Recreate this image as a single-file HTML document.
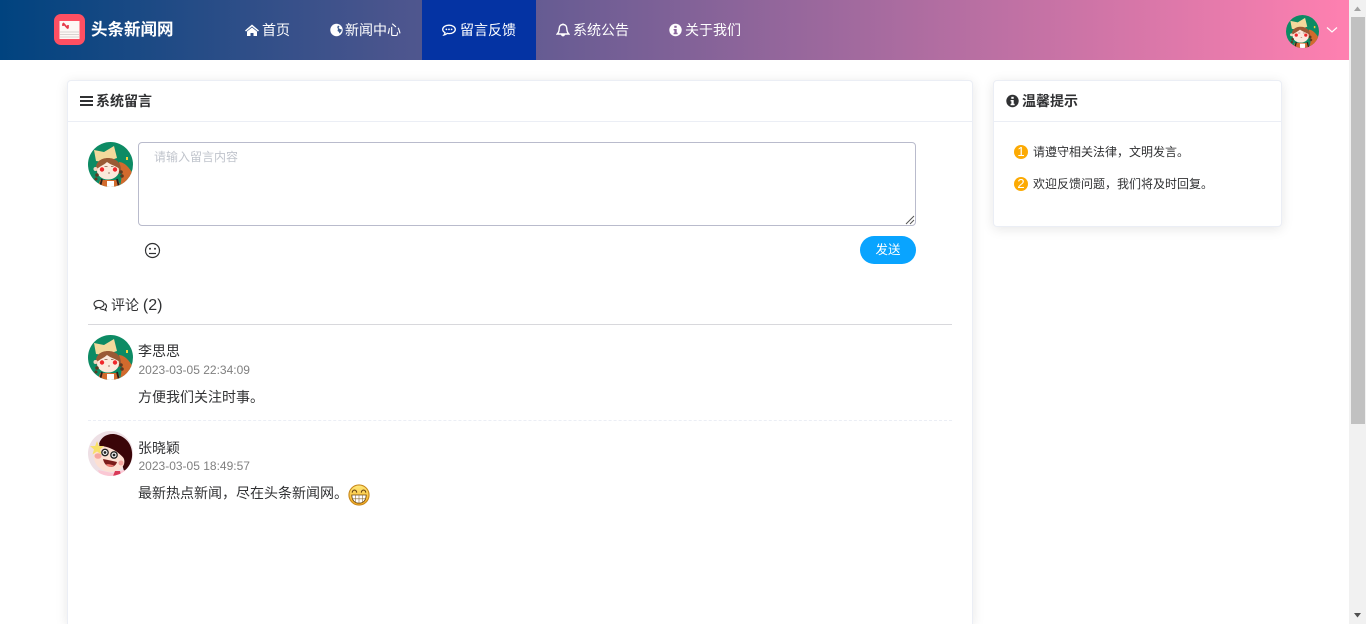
<!DOCTYPE html>
<html lang="zh"><head><meta charset="utf-8"><title>系统留言</title>
<style>
*{box-sizing:border-box}
html,body{margin:0;padding:0;width:1366px;height:624px;overflow:hidden;background:#fff}
body{position:relative;font-family:"Liberation Sans","Noto Sans CJK SC",sans-serif;font-size:14px;color:#303133}
.a{position:absolute;white-space:nowrap}
#hd{position:absolute;left:0;top:0;width:1349px;height:60px;background:linear-gradient(90deg,#00437f,#ff80b0)}
.nav{position:absolute;top:0;height:60px;line-height:60px;color:#fff;font-size:14px;white-space:nowrap}
.nav svg{position:absolute;top:23px;left:0}
.card{position:absolute;background:#fff;border:1px solid #ebeef5;border-radius:4px;box-shadow:0 2px 12px rgba(0,0,0,.1)}
.ct{font-weight:bold;font-size:14px;color:#303133;line-height:20px}
.line{position:absolute;height:1px;background:#ebeef5}
.av{position:absolute;width:45px;height:45px}
.num{position:absolute;width:14px;height:14px;border-radius:50%;background:#fcaa03;color:#fff;font-size:13px;line-height:14px;text-align:center}
</style></head><body>
<svg width="0" height="0" style="position:absolute">
<defs>
<clipPath id="c"><circle cx="22.5" cy="22.5" r="22.5"/></clipPath>
<g id="girl"><g clip-path="url(#c)">
<rect width="45" height="45" fill="#0d8b64"/>
<path d="M31 20 C36 20 41 25 45 32 V45 H32 L34 33 Z" fill="#d26a2d"/>
<path d="M6 8 L16 10 L26 4 L29 16 L17 20 L8 19 Z" fill="#f3d99c"/>
<path d="M8 28 C7 20 13 16 20 16 C27 16 33 20 33 28 L31 32 H10 Z" fill="#9a5a35"/>
<ellipse cx="20" cy="28.500" rx="11" ry="9" fill="#fbe9dc"/>
<path d="M9 27 C12 24 16 23 19 20 C23 23 28 24 32 27 C32 21 27 16.500 20 16.500 C14 16.500 9 21 9 27 Z" fill="#9a5a35"/>
<circle cx="7.500" cy="27" r="2" fill="#f5d5c0"/>
<circle cx="14" cy="27.500" r="2.200" fill="#f0272b"/><circle cx="27" cy="27.500" r="2.200" fill="#f0272b"/>
<path d="M16.500 24.500h3M23 24.500h2.500M20 31h2" stroke="#8a5a45" stroke-width=".7"/>
<circle cx="33" cy="30" r="1.800" fill="#5c3a22"/><circle cx="34" cy="34" r="1.800" fill="#5c3a22"/><circle cx="9" cy="33" r="1.800" fill="#5c3a22"/><circle cx="8" cy="37" r="1.500" fill="#5c3a22"/>
<path d="M10 45 L12 38 H30 L33 45 Z" fill="#d26a2d"/>
<path d="M19 39 H26 V45 H19 Z" fill="#fff"/>
<path d="M14 37 L12 45 M29 37 L31 45" stroke="#2a211c" stroke-width="1.800"/>
<rect x="38" y="15" width="2" height="3" fill="#f2d23c"/>
</g></g>
<g id="kid"><g clip-path="url(#c)">
<rect width="45" height="45" fill="#eee0e5"/>
<path d="M11 13 C13 5 22 1 30 4 C40 7 45 16 44 26 C43 33 40 37 36 40 L32 26 L14 18 Z" fill="#3a0508"/>
<path d="M6 24 C7 18 12 16 17 15 C24 14 33 20 36 28 C38 35 32 40 23 41 C13 41 5 33 6 24 Z" fill="#fde0d2"/>
<path d="M11 15 C16 8 30 10 36.500 28 C30 20 21 15 11 15 Z" fill="#3a0508"/>
<circle cx="17" cy="21.500" r="3.200" fill="#fff" stroke="#222" stroke-width="1.300"/><circle cx="26" cy="24" r="3.200" fill="#fff" stroke="#222" stroke-width="1.300"/>
<circle cx="17" cy="21.500" r="1.400" fill="#222"/><circle cx="26" cy="24" r="1.400" fill="#222"/>
<ellipse cx="10" cy="25" rx="3.500" ry="2.800" fill="#f6a6a0"/><ellipse cx="33" cy="32" rx="2.500" ry="2.500" fill="#f6a6a0"/>
<path d="M15 28 C20 29 25 30 29 31 C27 38 17 38 15 28 Z" fill="#7c1d1a"/>
<path d="M18 33.500 C20 32.500 23 33.500 26 34.500 C24 36.500 20 36.500 18 33.500 Z" fill="#ee7a6f"/>
<path d="M10 39 L24 42 L36 39 L42 45 H12 Z" fill="#fbc8d4"/>
<path d="M25 45 L27 40 L32 40 L33 45 Z" fill="#d93a58"/>
<path d="M9 10 L10.800 15 L16 15 L12 18.500 L13.500 23.500 L9 20.500 L4.500 23.500 L6 18.500 L2 15 L7.200 15 Z" fill="#f8e06a"/>
</g></g>
</defs></svg>

<div id="hd"></div>
<svg class="a" style="left:54px;top:14px" width="31" height="31" viewBox="0 0 31 31">
<rect width="31" height="31" rx="7" fill="#fe4f62"/>
<rect x="5.500" y="7" width="20" height="18" fill="#fdf7f5"/>
<path d="M6 18H25M6 20.500H25M6 23H25" stroke="#d9d3d1" stroke-width=".9"/>
<path d="M9 9 L14 14.500 M9 12V9.500 M14 14.500V11" stroke="#e63a4a" stroke-width="1.700"/>
</svg>
<div class="a" style="left:91px;top:17px;font-size:16.500px;line-height:26px;font-weight:bold;color:#fff">头条新闻网</div>

<div class="nav" style="left:245px;width:60px;padding-left:17px">
<svg width="14" height="14" viewBox="0 0 14 14"><path d="M7 1.500 L14 7.500 L13 8.500 L7 3.500 L1 8.500 L0 7.500 Z" fill="#fff"/><path d="M2 8.500 L7 4.500 L12 8.500 V13 H8.500 V10 H5.500 V13 H2 Z" fill="#fff"/></svg>首页</div>
<div class="nav" style="left:330px;padding-left:15px">
<svg width="13" height="14" viewBox="0 0 13 14"><circle cx="6.500" cy="7" r="6.200" fill="#fff"/><path d="M8 2.500 L9.500 3.500 L8.500 5 L10 6 L11.800 6.500 L11.300 8.500 L9.500 10.500 L8.800 8.800 L7.500 8 L8 6 L7.200 4.200 Z" fill="#3c5a8c"/></svg>新闻中心</div>
<div class="a" style="left:422px;top:0;width:114px;height:60px;background:#0433a3"></div>
<div class="nav" style="left:442px;padding-left:18px">
<svg width="14" height="14" viewBox="0 0 14 14" fill="none"><path d="M7 2.200 C10.600 2.200 13.300 4 13.300 6.400 C13.300 8.800 10.600 10.600 7 10.600 C6.300 10.600 5.700 10.500 5.100 10.400 C4.300 11.200 3.200 11.800 2 12 C2.700 11.200 3 10.400 3 9.600 C1.500 8.800 .7 7.700 .7 6.400 C.7 4 3.400 2.200 7 2.200 Z" stroke="#fff" stroke-width="1.300"/><circle cx="4.400" cy="6.400" r=".9" fill="#fff"/><circle cx="7" cy="6.400" r=".9" fill="#fff"/><circle cx="9.600" cy="6.400" r=".9" fill="#fff"/></svg>留言反馈</div>
<div class="nav" style="left:556px;padding-left:17px">
<svg width="14" height="14" viewBox="0 0 14 14" fill="none"><path d="M7 1.500 C4.500 1.500 3.200 3.400 3.200 5.600 C3.200 8.400 2.400 9.600 1.200 11 H12.800 C11.600 9.600 10.800 8.400 10.800 5.600 C10.800 3.400 9.500 1.500 7 1.500 Z" stroke="#fff" stroke-width="1.400"/><path d="M5.500 12 A1.600 1.600 0 0 0 8.500 12 Z M6.400 1 H7.600" fill="#fff" stroke="#fff" stroke-width=".9"/></svg>系统公告</div>
<div class="nav" style="left:669px;padding-left:16px">
<svg width="13" height="14" viewBox="0 0 13 14"><circle cx="6.500" cy="7" r="6.200" fill="#fff"/><rect x="5.300" y="2.800" width="2.400" height="2" fill="#87639a"/><path d="M4.600 6 H7.700 V9.800 H8.600 V11.200 H4.600 V9.800 H5.400 V7.400 H4.600 Z" fill="#87639a"/></svg>关于我们</div>

<svg class="av" style="left:1286px;top:15px;width:33px;height:33px" viewBox="0 0 45 45"><use href="#girl"/></svg>
<svg class="a" style="left:1326px;top:26px" width="12" height="8" viewBox="0 0 12 8"><path d="M1 1.500 L6 6 L11 1.500" fill="none" stroke="#fff" stroke-width="1.200"/></svg>

<!-- main card -->
<div class="card" style="left:67px;top:80px;width:906px;height:544px;border-bottom:0;border-radius:4px 4px 0 0"></div>
<div class="line" style="left:68px;top:121px;width:904px"></div>
<svg class="a" style="left:80px;top:95px" width="13" height="12" viewBox="0 0 13 12"><path d="M0 1h13v2H0zM0 5h13v2H0zM0 9h13v2H0z" fill="#303133"/></svg>
<div class="a ct" style="left:96px;top:91px">系统留言</div>

<svg class="av" style="left:88px;top:142px" viewBox="0 0 45 45"><use href="#girl"/></svg>
<div class="a" style="left:138px;top:142px;width:778px;height:84px;border:1px solid #b9bbcc;border-radius:4px"></div>
<div class="a" style="left:154px;top:149px;font-size:12px;line-height:16px;color:#c0c4cc">请输入留言内容</div>
<svg class="a" style="left:905px;top:215px" width="10" height="10" viewBox="0 0 10 10"><path d="M1 9 L9 1 M5 9 L9 5" stroke="#555" stroke-width="1"/></svg>
<svg class="a" style="left:144px;top:242px" width="17" height="17" viewBox="0 0 17 17" fill="none"><circle cx="8.500" cy="8.500" r="7" stroke="#303133" stroke-width="1.200"/><circle cx="6" cy="6.800" r="1" fill="#303133"/><circle cx="11" cy="6.800" r="1" fill="#303133"/><path d="M5 11.500h7" stroke="#303133" stroke-width="1.200"/></svg>
<div class="a" style="left:860px;top:236px;width:56px;height:28px;border-radius:14px;background:#09a4ff;color:#fff;font-size:12.500px;line-height:28px;text-align:center">发送</div>

<svg class="a" style="left:93px;top:299px" width="15" height="13" viewBox="0 0 15 13" fill="none"><ellipse cx="6" cy="5" rx="5" ry="3.600" stroke="#303133" stroke-width="1.100"/><path d="M3 8 L2.400 10 L5 8.600" stroke="#303133" stroke-width="1"/><path d="M11.800 4.500 C14 6 14 8.400 12.400 9.600 L13 11.600 L10.400 10.400 C9 10.600 7.600 10.200 6.800 9.400" stroke="#303133" stroke-width="1.100"/></svg>
<div class="a" style="left:111px;top:295px;font-size:14px;line-height:20px;color:#303133">评论 <span style="font-size:16px">(2)</span></div>
<div class="line" style="left:88px;top:324px;width:864px;background:#d8d8dc"></div>

<svg class="av" style="left:88px;top:335px" viewBox="0 0 45 45"><use href="#girl"/></svg>
<div class="a" style="left:138px;top:341px;font-size:14px;line-height:20px">李思思</div>
<div class="a" style="left:138.500px;top:362px;font-size:12px;line-height:16px;color:#808080">2023-03-05 22:34:09</div>
<div class="a" style="left:138px;top:387px;font-size:14px;line-height:20px">方便我们关注时事。</div>
<div class="a" style="left:88px;top:420px;width:864px;height:0;border-top:1px dashed #ebeef5"></div>

<svg class="av" style="left:88px;top:431px" viewBox="0 0 45 45"><use href="#kid"/></svg>
<div class="a" style="left:138px;top:438px;font-size:14px;line-height:20px">张晓颖</div>
<div class="a" style="left:138.500px;top:458px;font-size:12px;line-height:16px;color:#808080">2023-03-05 18:49:57</div>
<div class="a" style="left:138px;top:483px;font-size:14px;line-height:20px">最新热点新闻，尽在头条新闻网。</div>
<svg class="a" style="left:348px;top:484px" width="22" height="22" viewBox="0 0 23 23"><defs><linearGradient id="e" x1="0" y1="0" x2="0" y2="1"><stop offset="0" stop-color="#ffe97a"/><stop offset="1" stop-color="#f8ab1c"/></linearGradient></defs><circle cx="11.500" cy="11.500" r="10.500" fill="url(#e)" stroke="#c98a1e" stroke-width="1.200"/><path d="M4.500 9 A2 2.400 0 0 1 9 9 M14 9 A2 2.400 0 0 1 18.500 9" fill="none" stroke="#6a4510" stroke-width="1.200"/><path d="M4 11.500 H19 C19 18 15 20 11.500 20 C8 20 4 18 4 11.500 Z" fill="#fff" stroke="#6a4510" stroke-width=".9"/><path d="M4.500 15.500 H18.500 M8 12 V19.500 M11.500 12 V20 M15 12 V19.500" stroke="#8a6a30" stroke-width=".6"/></svg>

<!-- side card -->
<div class="card" style="left:993px;top:80px;width:289px;height:147px"></div>
<div class="line" style="left:994px;top:121px;width:287px"></div>
<svg class="a" style="left:1006px;top:94px" width="13" height="14" viewBox="0 0 13 14"><circle cx="6.500" cy="7" r="6.200" fill="#303133"/><rect x="5.300" y="2.800" width="2.400" height="2" fill="#fff"/><path d="M4.600 6 H7.700 V9.800 H8.600 V11.200 H4.600 V9.800 H5.400 V7.400 H4.600 Z" fill="#fff"/></svg>
<div class="a ct" style="left:1022px;top:91px">温馨提示</div>
<div class="num" style="left:1014px;top:145px">1</div>
<div class="a" style="left:1033px;top:143px;font-size:12px;line-height:18px">请遵守相关法律，文明发言。</div>
<div class="num" style="left:1014px;top:177px">2</div>
<div class="a" style="left:1033px;top:175px;font-size:12px;line-height:18px">欢迎反馈问题，我们将及时回复。</div>

<!-- scrollbar -->
<div class="a" style="left:1349px;top:0;width:17px;height:624px;background:#f1f1f1"></div>
<div class="a" style="left:1351px;top:17px;width:14px;height:407px;background:#c1c1c1"></div>
<svg class="a" style="left:1349px;top:0" width="17" height="17" viewBox="0 0 17 17"><path d="M5 11 L8.500 6.500 L12 11 Z" fill="#a3a3a3"/></svg>
<svg class="a" style="left:1349px;top:607px" width="17" height="17" viewBox="0 0 17 17"><path d="M5 6 L12 6 L8.500 10.500 Z" fill="#505050"/></svg>
</body></html>
